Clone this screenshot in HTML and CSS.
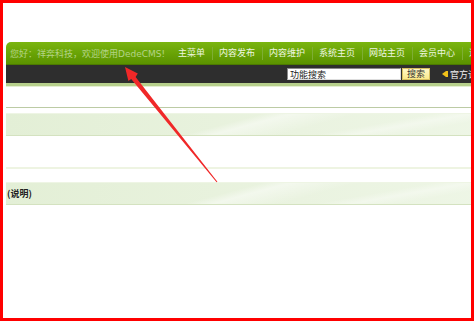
FILE: index.html
```html
<!DOCTYPE html>
<html lang="zh-CN">
<head>
    <meta charset="UTF-8">
    <title>DedeCMS 管理</title>
    <link rel="stylesheet" href="styles.css">
</head>
<body>
    <div class="wrap">
        <div class="topbar">
            <div class="greet">您好：祥奔科技，欢迎使用DedeCMS!</div>
            <ul class="menu">
                <li>主菜单</li>
                <li>内容发布</li>
                <li>内容维护</li>
                <li>系统主页</li>
                <li>网站主页</li>
                <li>会员中心</li>
                <li>退出</li>
            </ul>
        </div>
        <div class="subbar">
            <input class="search-input" type="text" value="功能搜索">
            <button class="search-btn">搜索</button>
            <span class="speaker"></span>
            <span class="forum">官方论坛</span>
        </div>

        <div class="gap-top"></div>
        <div class="band"></div>
        <div class="spacer"></div>
        <div class="thin-line"></div>
        <div class="band band-label">(说明)</div>
    </div>

    <!-- annotation overlay -->
    <svg class="arrow" width="474" height="321" viewBox="0 0 474 321">
        <polygon fill="#f02828" points="125,67 137.8,73.5 135.6,77.0 217.4,181.7 216.6,182.3 131.2,79.1 128.4,80.9"/>
    </svg>
    <div class="frame"></div>
</body>
</html>
```

FILE: styles.css
```css
* {
    margin: 0;
    padding: 0;
    box-sizing: border-box;
}

html, body {
    width: 474px;
    height: 321px;
    overflow: hidden;
    background: #fff;
}

body {
    font-family: 'DejaVu Sans', 'Noto Sans CJK SC', sans-serif;
    font-size: 9px;
    padding-top: 42px;
}

.wrap {
    margin-left: 6px;
    width: 490px;
}

.topbar {
    height: 23px;
    display: flex;
    align-items: center;
    background: linear-gradient(#7ab510, #66a004 60%, #5b9200);
    border-radius: 5px 0 0 0;
    border-bottom: 1px solid #4c7a00;
    white-space: nowrap;
}

.greet {
    width: 172px;
    padding-left: 4px;
    color: #b3d386;
}

.menu {
    list-style: none;
    display: flex;
}

.menu li {
    padding: 0 6.5px;
    line-height: 13px;
    color: #eef6e0;
    border-right: 1px solid #7eae34;
}

.menu li:first-child {
    padding-left: 0;
}

.subbar {
    height: 21px;
    display: flex;
    align-items: center;
    justify-content: flex-end;
    padding-right: 10px;
    background: #2e2e2e;
    border-bottom: 3px solid #b7d08c;
    box-shadow: 0 1px 0 #e4eed2;
}

.search-input {
    width: 114px;
    height: 12px;
    border: 1px solid #8a8a8a;
    border-right-color: #ddd;
    border-bottom-color: #ddd;
    background: #fff;
    font-family: 'Noto Sans CJK SC', sans-serif;
    font-size: 9px;
    line-height: 10px;
    padding: 0 2px;
    color: #222;
    outline: none;
}

.search-btn {
    width: 28px;
    height: 12px;
    margin-left: 1px;
    border: 1px solid #d8c060;
    background: linear-gradient(#fff8c8, #fbe98a);
    font-family: 'Noto Sans CJK SC', sans-serif;
    font-size: 9px;
    line-height: 10px;
    color: #333;
}

.speaker {
    width: 0;
    height: 0;
    margin-left: 12px;
    border-top: 3px solid transparent;
    border-bottom: 3px solid transparent;
    border-right: 4px solid #f2c21a;
    box-shadow: 2px 0 0 #f2c21a;
}

.forum {
    margin-left: 4px;
    color: #f0f0f0;
    font-family: 'Noto Sans CJK SC', sans-serif;
}

.gap-top {
    height: 22px;
    border-bottom: 1px solid #bccba4;
}

.band {
    height: 23px;
    margin-top: 5px;
    border-top: 1px solid #eef5e4;
    border-bottom: 1px solid #d4e2c0;
    background:
        linear-gradient(165deg, transparent 45%, rgba(255, 255, 255, 0.45) 50%, transparent 62%),
        linear-gradient(170deg, transparent 70%, rgba(255, 255, 255, 0.35) 76%, transparent 84%),
        linear-gradient(90deg, #e3efd6, #eaf3e0 60%, #eef6e6);
}

.spacer {
    height: 31px;
}

.thin-line {
    height: 2px;
    background: #eef4e2;
}

.band-label {
    margin-top: 13px;
    padding-left: 1px;
    line-height: 21px;
    font-family: 'Noto Sans CJK SC', sans-serif;
    font-weight: bold;
    color: #222;
}

.arrow {
    position: absolute;
    left: 0;
    top: 0;
    pointer-events: none;
}

.frame {
    position: absolute;
    left: 0;
    top: 0;
    width: 474px;
    height: 321px;
    border: 3px solid #ff0000;
    pointer-events: none;
}
```
